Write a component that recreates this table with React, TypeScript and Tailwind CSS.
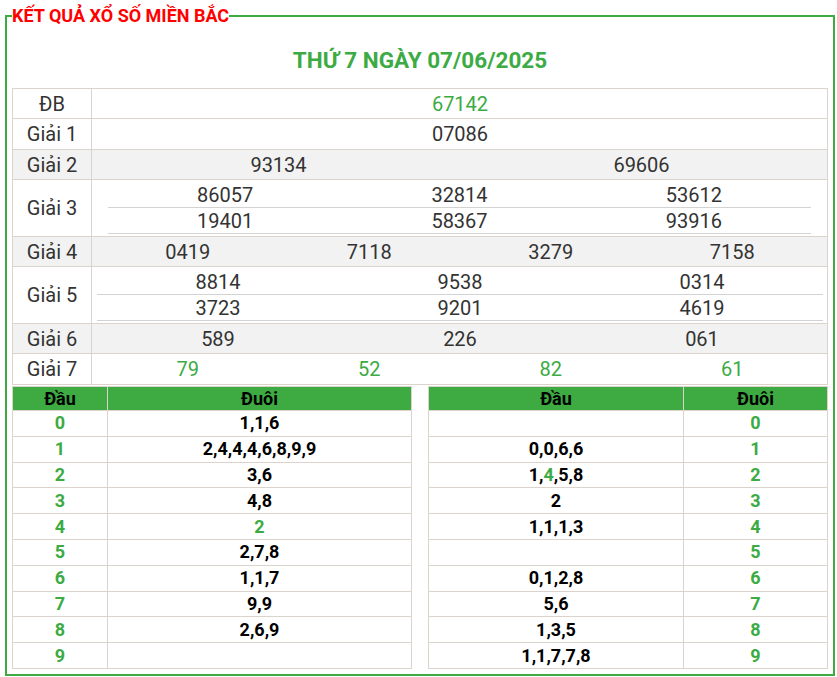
import React from "react"

const green = "text-[#3cab44]"

const prizes: { label: string; rows: string[][]; shaded?: boolean; win?: boolean; inner?: string; tall?: boolean }[] = [
  { label: "ĐB", rows: [["67142"]], win: true },
  { label: "Giải 1", rows: [["07086"]], tall: true },
  { label: "Giải 2", rows: [["93134", "69606"]], shaded: true },
  { label: "Giải 3", rows: [["86057", "32814", "53612"], ["19401", "58367", "93916"]], inner: "px-[16px] pt-[2px] pb-[2px]" },
  { label: "Giải 4", rows: [["0419", "7118", "3279", "7158"]], shaded: true },
  { label: "Giải 5", rows: [["8814", "9538", "0314"], ["3723", "9201", "4619"]], inner: "pl-[5px] pr-[4px] pt-[2px] pb-[2px]" },
  { label: "Giải 6", rows: [["589", "226", "061"]], shaded: true },
  { label: "Giải 7", rows: [["79", "52", "82", "61"]], win: true, tall: true },
]

const dau = ["1,1,6", "2,4,4,4,6,8,9,9", "3,6", "4,8", "2", "2,7,8", "1,1,7", "9,9", "2,6,9", ""]
const duoi = ["", "0,0,6,6", "1,4,5,8", "2", "1,1,1,3", "", "0,1,2,8", "5,6", "1,3,5", "1,1,7,7,8"]

function PrizeRow({ p }: { p: (typeof prizes)[number] }) {
  const bg = p.shaded ? "bg-[#f2f2f2]" : "bg-white"
  const color = p.win ? green : "text-[#333]"
  if (p.rows.length > 1) {
    return (
      <tr className={bg}>
        <td className="border border-[#dad4cd] text-center">{p.label}</td>
        <td className={`border border-[#dad4cd] ${p.inner}`}>
          {p.rows.map((r, i) => (
            <div key={i} className="grid grid-cols-3 h-[26px] items-center border-b border-[#d3d3d3]">
              {r.map((n, j) => (
                <span key={j} className={`text-center ${color}`}>{n}</span>
              ))}
            </div>
          ))}
        </td>
      </tr>
    )
  }
  const cols = p.rows[0].length
  const grid = cols === 1 ? "grid-cols-1" : cols === 2 ? "grid-cols-2" : cols === 3 ? "grid-cols-3" : "grid-cols-4"
  return (
    <tr className={`${bg} ${p.tall ? "h-[31px]" : "h-[30px]"}`}>
      <td className="border border-[#dad4cd] text-center">{p.label}</td>
      <td className="border border-[#dad4cd] pl-[5px] pr-[4px]">
        <div className={`grid ${grid}`}>
          {p.rows[0].map((n, j) => (
            <span key={j} className={`text-center ${color}`}>{n}</span>
          ))}
        </div>
      </td>
    </tr>
  )
}

function LotoTable({ left }: { left: boolean }) {
  return (
    <table className="w-[400px] border-collapse text-[18px] leading-[20px] font-bold text-black table-fixed">
      <colgroup>
        <col className={left ? "w-[95px]" : "w-[255px]"} />
        <col />
      </colgroup>
      <thead>
        <tr className="bg-[#3dab42] h-[24px]">
          <th className="border border-[#dad4cd] font-bold">Đầu</th>
          <th className="border border-[#dad4cd] font-bold">Đuôi</th>
        </tr>
      </thead>
      <tbody>
        {Array.from({ length: 10 }).map((_, i) => {
          const val = left ? dau[i] : duoi[i]
          return (
            <tr key={i} className="h-[25.8px]">
              {left ? (
                <>
                  <td className={`border border-[#dad4cd] text-center ${green}`}>{i}</td>
                  <td className={`border border-[#dad4cd] text-center ${i === 4 ? green : ""}`}>{val}</td>
                </>
              ) : (
                <>
                  <td className="border border-[#dad4cd] text-center">
                    {i === 2 ? (
                      <>
                        1,<span className={green}>4</span>,5,8
                      </>
                    ) : (
                      val
                    )}
                  </td>
                  <td className={`border border-[#dad4cd] text-center ${green}`}>{i}</td>
                </>
              )}
            </tr>
          )
        })}
      </tbody>
    </table>
  )
}

export default function App() {
  return (
    <div className="bg-white h-[677px] font-['Roboto',sans-serif]">
      <fieldset className="ml-[5px] w-[830px] border-2 border-[#3dab42] px-[5px] pb-[5px]">
        <legend className="text-[18px] leading-[31px] font-bold text-[#ff0000]">KẾT QUẢ XỔ SỐ MIỀN BẮC</legend>
        <h2 className={`h-[57px] pt-[3px] flex items-center justify-center text-[22.5px] font-bold ${green}`}>
          THỨ 7 NGÀY 07/06/2025
        </h2>
        <table className="w-full border-collapse text-[20px] leading-[24px] text-[#333] table-fixed">
          <colgroup>
            <col className="w-[79px]" />
            <col />
          </colgroup>
          <tbody>
            {prizes.map((p) => (
              <PrizeRow key={p.label} p={p} />
            ))}
          </tbody>
        </table>
        <div className="flex justify-between mt-[1px]">
          <LotoTable left />
          <LotoTable left={false} />
        </div>
      </fieldset>
    </div>
  )
}
